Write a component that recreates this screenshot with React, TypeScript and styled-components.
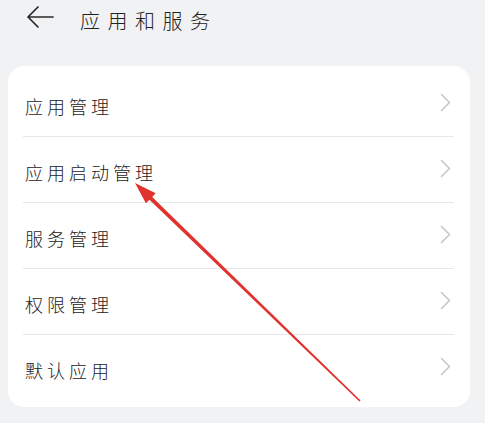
import React from "react";
import styled, { createGlobalStyle } from "styled-components";

const GlobalStyle = createGlobalStyle`
  html, body {
    margin: 0;
    padding: 0;
    background: #f1f2f4;
  }
  body {
    font-family: "Noto Sans CJK SC", "Noto Sans", sans-serif;
    color: #2a2a2a;
  }
`;

const items = ["应用管理", "应用启动管理", "服务管理", "权限管理", "默认应用"];

const App = () => {
  return (
    <Page>
      <GlobalStyle />
      <Header>
        <BackButton aria-label="返回">
          <svg width="27" height="22" viewBox="0 0 27 22" fill="none">
            <path d="M11 1 L1 11 L11 21 M1 11 H26" stroke="#2a2a2a" strokeWidth="1.7" strokeLinecap="round" strokeLinejoin="round" />
          </svg>
        </BackButton>
        <Title>应用和服务</Title>
      </Header>

      <Card>
        {items.map((label, i) => (
          <Row key={label} $last={i === items.length - 1}>
            <Label>{label}</Label>
            <Chevron width="11" height="19" viewBox="0 0 11 19" fill="none">
              <path d="M1.5 1.5 L9.5 9.5 L1.5 17.5" stroke="#c4c4c4" strokeWidth="1.5" strokeLinecap="round" strokeLinejoin="round" />
            </Chevron>
          </Row>
        ))}
      </Card>

      {/* annotation arrow drawn over the screenshot */}
      <Annotation width="485" height="423" viewBox="0 0 485 423">
        <polygon
          fill="#e0332f"
          points="135,183 145.9,203.3 149.4,199.7 359.4,401.6 360.6,400.4 152.2,196.9 155.7,193.3"
        />
      </Annotation>
    </Page>
  );
};

const Page = styled.div`
  position: relative;
  width: 485px;
  height: 423px;
  overflow: hidden;
`;

const Header = styled.div`
  display: flex;
  align-items: center;
  height: 38px;
  padding-left: 27px;
  margin-bottom: 28px;
`;

const BackButton = styled.div`
  display: flex;
  align-items: center;
  width: 27px;
  height: 22px;
  margin-top: -4px;
  margin-right: 26px;
`;

const Title = styled.div`
  font-size: 20px;
  font-weight: 300;
  letter-spacing: 7.5px;
  color: #222;
  margin-top: 2px;
`;

const Card = styled.div`
  margin: 0 15px 0 8px;
  background: #ffffff;
  border-radius: 16px;
  padding: 5px 0 7px;
`;

const Row = styled.div<{ $last?: boolean }>`
  display: flex;
  align-items: center;
  justify-content: space-between;
  height: 65px;
  margin: 0 16px 0 15px;
  padding: 0 3px 0 2px;
  border-bottom: ${(p) => (p.$last ? "none" : "1px solid #e6e6e8")};
`;

const Label = styled.span`
  font-size: 18px;
  font-weight: 300;
  letter-spacing: 4px;
  color: #222;
  margin-top: 4px;
`;

const Chevron = styled.svg`
  display: block;
  margin-top: -3px;
`;

const Annotation = styled.svg`
  position: absolute;
  left: 0;
  top: 0;
  pointer-events: none;
`;

export default App;
